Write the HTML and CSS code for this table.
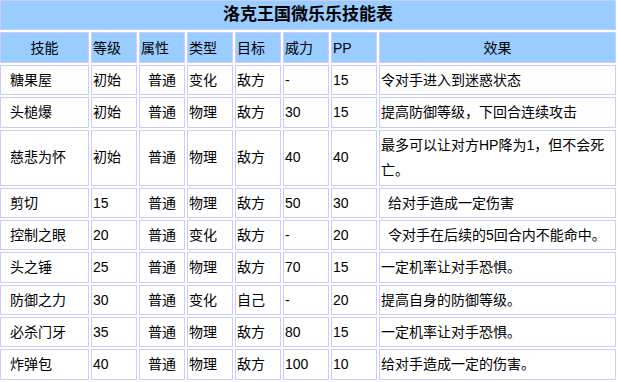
FILE: index.html
```html
<!DOCTYPE html>
<html lang="zh">
<head>
<meta charset="utf-8">
<title>洛克王国微乐乐技能表</title>
<link rel="stylesheet" href="styles.css">
</head>
<body>
<table class="skills">
  <colgroup>
    <col class="c-name"><col class="c-s"><col class="c-s"><col class="c-s"><col class="c-s"><col class="c-s"><col class="c-s"><col class="c-effect">
  </colgroup>
  <tr class="title-row"><th colspan="8" class="title">洛克王国微乐乐技能表</th></tr>
  <tr class="head-row">
    <td class="hd center">技能</td>
    <td class="hd">等级</td>
    <td class="hd">属性</td>
    <td class="hd">类型</td>
    <td class="hd">目标</td>
    <td class="hd">威力</td>
    <td class="hd">PP</td>
    <td class="hd center">效果</td>
  </tr>
  <tr class="row">
    <td class="name">糖果屋</td><td>初始</td><td class="center">普通</td><td>变化</td><td>敌方</td><td>-</td><td>15</td><td>令对手进入到迷惑状态</td>
  </tr>
  <tr class="row">
    <td class="name">头槌爆</td><td>初始</td><td class="center">普通</td><td>物理</td><td>敌方</td><td>30</td><td>15</td><td>提高防御等级，下回合连续攻击</td>
  </tr>
  <tr class="row tall">
    <td class="name">慈悲为怀</td><td>初始</td><td class="center">普通</td><td>物理</td><td>敌方</td><td>40</td><td>40</td><td>最多可以让对方HP降为1，但不会死<br>亡。</td>
  </tr>
  <tr class="row">
    <td class="name">剪切</td><td>15</td><td class="center">普通</td><td>物理</td><td>敌方</td><td>50</td><td>30</td><td class="ind">给对手造成一定伤害</td>
  </tr>
  <tr class="row">
    <td class="name">控制之眼</td><td>20</td><td class="center">普通</td><td>变化</td><td>敌方</td><td>-</td><td>20</td><td class="ind">令对手在后续的5回合内不能命中。</td>
  </tr>
  <tr class="row">
    <td class="name">头之锤</td><td>25</td><td class="center">普通</td><td>物理</td><td>敌方</td><td>70</td><td>15</td><td>一定机率让对手恐惧。</td>
  </tr>
  <tr class="row">
    <td class="name">防御之力</td><td>30</td><td class="center">普通</td><td>变化</td><td>自己</td><td>-</td><td>20</td><td>提高自身的防御等级。</td>
  </tr>
  <tr class="row">
    <td class="name">必杀门牙</td><td>35</td><td class="center">普通</td><td>物理</td><td>敌方</td><td>80</td><td>15</td><td>一定机率让对手恐惧。</td>
  </tr>
  <tr class="row">
    <td class="name">炸弹包</td><td>40</td><td class="center">普通</td><td>物理</td><td>敌方</td><td>100</td><td>10</td><td>给对手造成一定的伤害。</td>
  </tr>
</table>
</body>
</html>
```

FILE: styles.css
```css
html, body {
  margin: 0;
  padding: 0;
  overflow: hidden;
  background: #ffffff;
}

.skills {
  margin: -3px 0 0 -3px;
  border: 1px solid #ccccff;
  border-spacing: 2px;
  table-layout: fixed;
  width: 622px;
  font-family: "Liberation Sans", "Noto Sans CJK SC", sans-serif;
  font-size: 14px;
  color: #000;
}

.c-name { width: 89px; }
.c-s { width: 46px; }
.c-effect { width: 237px; }

.skills td,
.skills th {
  border: 1px solid #ccccff;
  padding: 0 1px;
  line-height: 20px;
  text-align: left;
  vertical-align: middle;
  white-space: nowrap;
  overflow: hidden;
}

.title-row { height: 30px; }
.head-row { height: 31px; }
.row { height: 30.33px; }

.skills .title {
  background: #99ccff;
  text-align: center;
  font-size: 17px;
  font-weight: bold;
}

.skills .hd { background: #99ccff; }

.skills .center { text-align: center; }

.skills .name { padding-left: 9px; }

.skills .ind { padding-left: 8px; }

.tall td {
  line-height: 25px;
  padding-top: 2px;
  padding-bottom: 2px;
}
```
